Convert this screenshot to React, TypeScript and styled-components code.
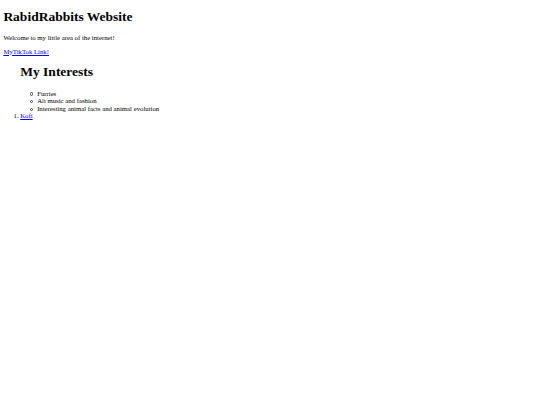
import React from "react";
import styled, { createGlobalStyle } from "styled-components";

const S = 540 / 1280;
const px = (n: number) => `${n * S}px`;

const Global = createGlobalStyle`
  html, body { background: #fff; }
  body {
    margin: ${px(8)};
    font-family: "Liberation Serif", "Times New Roman", serif;
    font-size: ${px(16)};
    line-height: 1.12;
    color: #000;
  }
`;

const Title = styled.h1<{ $first?: boolean }>`
  font-size: 2em;
  font-weight: bold;
  margin: 0.67em 0;
  margin-top: ${(p) => (p.$first ? "6px" : "0.67em")};
`;

const Para = styled.p`
  margin: 1em 0;
`;

const Link = styled.a`
  color: #0000ee;
  text-decoration: underline;
`;

const OrderedList = styled.ol`
  margin: 1em 0;
  padding-left: ${px(40)};
  list-style-type: decimal;
`;

const SubList = styled.ul`
  margin: 0;
  padding-top: 1px;
  padding-left: ${px(40)};
  list-style: none;
`;

const Item = styled.li``;

const CircleItem = styled.li`
  position: relative;
  &::before {
    content: "";
    position: absolute;
    left: -7px;
    top: 2.9px;
    width: 3.2px;
    height: 3.2px;
    box-sizing: border-box;
    border: 0.6px solid #444;
    border-radius: 50%;
  }
`;

export default function App() {
  return (
    <>
      <Global />
      <Title $first>RabidRabbits Website</Title>
      <Para>Welcome to my little area of the internet!</Para>
      <Para>
        <Link href="#">MyTikTok Link!</Link>
      </Para>
      <OrderedList>
        <Title>My Interests</Title>
        <SubList>
          <CircleItem>Furries</CircleItem>
          <CircleItem>Alt music and fashion</CircleItem>
          <CircleItem>Interesting animal facts and animal evolution</CircleItem>
        </SubList>
        <Item>
          <Link href="#">Kofi</Link>
        </Item>
      </OrderedList>
    </>
  );
}
